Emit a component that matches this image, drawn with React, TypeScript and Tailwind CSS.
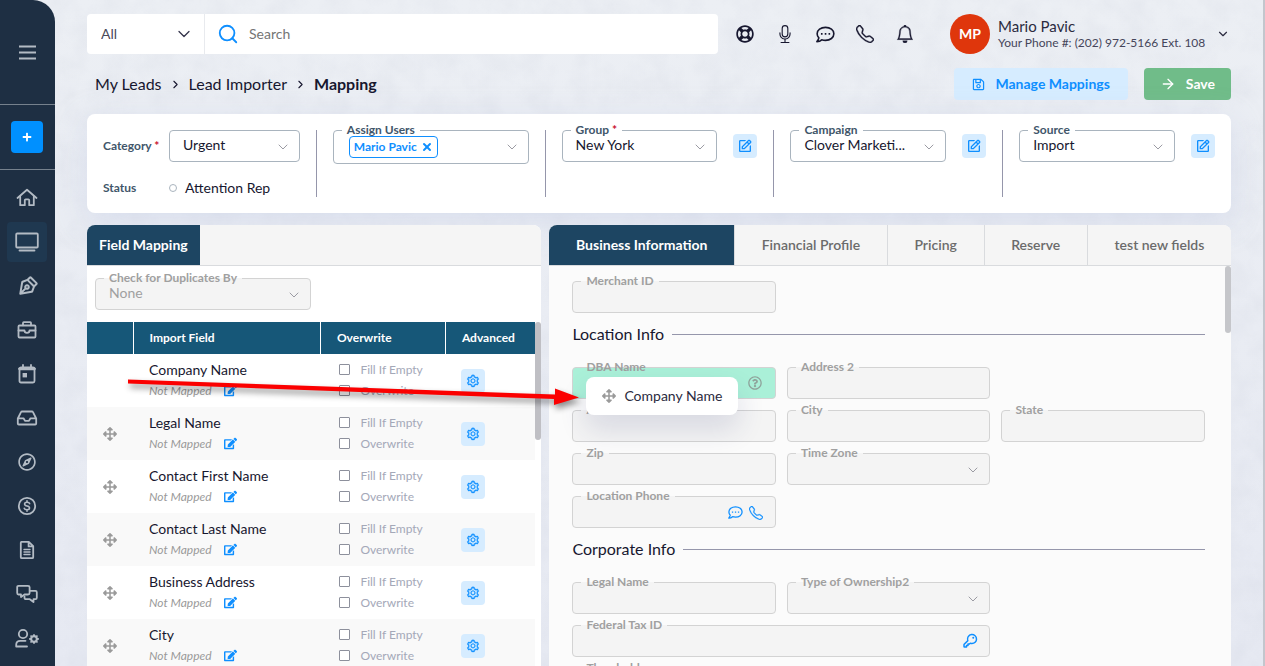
import React, { useState } from 'react';
import { FaArrowsAlt, FaEdit, FaRegLifeRing, FaRegCompass, FaRegQuestionCircle, FaRegSave, FaPlus } from 'react-icons/fa';
import { BsBell, BsMic, BsTelephone, BsGearFill } from 'react-icons/bs';
import { PiKeyBold, PiPenNibBold } from 'react-icons/pi';
import { AiOutlineSetting } from 'react-icons/ai';
import { BiEdit } from 'react-icons/bi';
import { ArrowRight, ChevronDown, ChevronRight, Search, X } from 'lucide-react';

interface ImportField {
  id: string;
  name: string;
  dragging?: boolean;
}

const importFields: ImportField[] = [
  { id: 'company', name: 'Company Name', dragging: true },
  { id: 'legal', name: 'Legal Name' },
  { id: 'first', name: 'Contact First Name' },
  { id: 'last', name: 'Contact Last Name' },
  { id: 'address', name: 'Business Address' },
  { id: 'city', name: 'City' },
];

const tabs = ['Business Information', 'Financial Profile', 'Pricing', 'Reserve', 'test new fields'];

const lineIcon = {
  width: 22,
  height: 22,
  viewBox: '0 0 22 22',
  fill: 'none',
  stroke: 'currentColor',
  strokeWidth: 1.8,
  strokeLinejoin: 'round' as const,
  strokeLinecap: 'round' as const,
};

const HomeIcon = () => (
  <svg {...lineIcon}>
    <path d="M1.5 11 11 2.8 20.500 11" />
    <path d="M4.200 9.500V18.200H8.800V13.200Q8.800 12.300 9.700 12.300H12.300Q13.200 12.300 13.200 13.200V18.200H17.800V9.500" />
  </svg>
);

const MonitorIcon = () => (
  <svg {...lineIcon} width={24} height={22} viewBox="0 0 24 22">
    <rect x="1.200" y="2.500" width="21.600" height="14" rx="1" />
    <path d="M4.500 19.500H19.500" />
  </svg>
);

const BriefcaseIcon = () => (
  <svg {...lineIcon}>
    <rect x="2.500" y="6.500" width="17" height="12" rx="1" />
    <path d="M7 6.300V4Q7 3.200 7.800 3.200H14.200Q15 3.200 15 4V6.300M2.500 11.500H8.500Q8.500 13.800 11 13.800T13.500 11.500H19.500" />
  </svg>
);

const CalendarIcon = () => (
  <svg {...lineIcon}>
    <rect x="3.500" y="4.500" width="15" height="15" rx="1.500" />
    <path d="M3.500 5.800H18.500" strokeWidth="2.800" />
    <path d="M7 2V5M15 2V5" />
    <rect x="6.600" y="10" width="4.400" height="4.400" fill="currentColor" stroke="none" />
  </svg>
);

const InboxIcon = () => (
  <svg {...lineIcon}>
    <path d="M1.800 11.500 5 5.200Q5.300 4.500 6.200 4.500H15.800Q16.700 4.500 17 5.200L20.200 11.500V16.500Q20.200 17.500 19.200 17.500H2.800Q1.800 17.500 1.800 16.500ZM2 11.300H7.500L9 13.800H13L14.500 11.300H20" />
  </svg>
);

const DollarIcon = () => (
  <svg {...lineIcon}>
    <circle cx="11" cy="11" r="8.200" />
    <path strokeWidth="1.600" d="M13.600 8.600Q13.200 7.300 11 7.300Q8.600 7.300 8.600 9Q8.600 10.600 11 11Q13.500 11.400 13.500 13Q13.500 14.700 11 14.700Q8.600 14.700 8.300 13.300M11 5.700V7.300M11 14.700V16.300" />
  </svg>
);

const FileIcon = () => (
  <svg {...lineIcon}>
    <path d="M5.300 2.800H12.800L17.200 7.200V18.200Q17.200 19.200 16.200 19.200H5.800Q4.800 19.200 4.800 18.200V3.800Q4.800 2.800 5.800 2.800M12.600 3V7.400H17" />
    <path strokeWidth="1.400" d="M8 10.500H14M8 13H14M8 15.500H14" />
  </svg>
);

const ChatsIcon = () => (
  <svg {...lineIcon}>
    <path d="M2.500 2.800H12Q13.600 2.800 13.600 4.300V10Q13.600 11.500 12 11.500H8.500L5 14V11.500H2.500Q1.200 11.500 1.200 10V4.300Q1.200 2.800 2.500 2.800Z" />
    <path d="M13.800 7.800H19.500Q20.800 7.800 20.800 9.200V14.700Q20.800 16.200 19.500 16.200H17.500V19L13.800 16.200H10Q8.500 16.200 8.500 14.700V13.500" />
  </svg>
);

const UserGearIcon = () => (
  <span className="flex items-end">
    <svg {...lineIcon} width={14} height={20} viewBox="0 0 14 20">
      <circle cx="8" cy="6" r="4.200" />
      <path d="M12 18.500H1.200V16.800Q1.200 12.800 5.200 12.800H10.500" />
    </svg>
    <BsGearFill size={10} className="mb-1" />
  </span>
);

// speech bubble with three dots and a tail at the lower left
const ChatBubble = ({ size }: { size: number }) => (
  <svg width={size} height={size} viewBox="0 0 20 20" fill="none" stroke="currentColor" strokeWidth="1.700" strokeLinejoin="round">
    <path d="M10 2.500C5 2.500 1.200 5.400 1.200 9.300C1.200 11 1.900 12.500 3 13.600C2.800 15 2 16.300 1 17.500C3 17.500 4.800 16.800 6 15.600C7.200 16 8.600 16.200 10 16.200C15 16.200 18.800 13.200 18.800 9.300C18.800 5.400 15 2.500 10 2.500Z" />
    <path d="M5.200 9.400H6.900M9.200 9.400H10.900M13.200 9.400H14.900" strokeWidth="1.800" />
  </svg>
);

const sidebarItems = [
  { label: 'Home', icon: <HomeIcon /> },
  { label: 'Leads', icon: <MonitorIcon />, active: true },
  { label: 'Signatures', icon: <PiPenNibBold size={21} /> },
  { label: 'Portfolio', icon: <BriefcaseIcon /> },
  { label: 'Calendar', icon: <CalendarIcon /> },
  { label: 'Inbox', icon: <InboxIcon /> },
  { label: 'Explore', icon: <FaRegCompass size={18} /> },
  { label: 'Residuals', icon: <DollarIcon /> },
  { label: 'Documents', icon: <FileIcon /> },
  { label: 'Messages', icon: <ChatsIcon /> },
  { label: 'User settings', icon: <UserGearIcon /> },
];

const Sidebar = () => (
  <aside className="relative w-[55px] shrink-0 bg-[#1e2f43] text-[#b3bbc4] rounded-tr-[22px]">
    <div className="h-[104px] pr-px flex items-center justify-center">
      <button aria-label="Menu">
        <svg width="17" height="15" viewBox="0 0 17 15" stroke="currentColor" strokeWidth="2">
          <path d="M0 1.500H17M0 7.500H17M0 13.500H17" />
        </svg>
      </button>
    </div>
    <div className="h-[66px] pr-px border-y border-[#76818d] flex items-center justify-center">
      <button aria-label="Add" className="w-8 h-8 rounded bg-[#0090ff] text-white flex items-center justify-center">
        <FaPlus size={10} />
      </button>
    </div>
    <nav className="flex flex-col items-center gap-1 pt-2 pr-px">
      {sidebarItems.map(item => (
        <a
          key={item.label}
          href="#"
          aria-label={item.label}
          className={`w-10 h-10 shrink-0 rounded flex items-center justify-center ${item.active ? 'bg-[#1f3850]' : ''}`}
        >
          {item.icon}
        </a>
      ))}
    </nav>
  </aside>
);

const TopBar = () => (
  <header className="flex items-center h-10">
    <div className="flex flex-1 h-10 bg-white rounded overflow-hidden">
      <div className="relative w-[118px] border-r border-[#e8eaee]">
        <select aria-label="Search in" className="appearance-none w-full h-full pl-[14px] text-sm text-[#4a4a5a] outline-none">
          <option>All</option>
        </select>
        <ChevronDown size={20} strokeWidth={1.500} className="absolute right-[10px] top-[10px] text-[#33334a] pointer-events-none" />
      </div>
      <Search size={22} strokeWidth={2} className="ml-3 self-center text-[#0f8fff]" />
      <input aria-label="Search" placeholder="Search" className="flex-1 pl-[10px] text-sm outline-none placeholder:text-[#757575]" />
    </div>
    <div className="flex ml-[7px] text-[#17172f]">
      <button aria-label="Help" className="w-10 h-10 flex items-center justify-center"><FaRegLifeRing size={18} /></button>
      <button aria-label="Voice" className="w-10 h-10 flex items-center justify-center"><BsMic size={18} /></button>
      <button aria-label="Messages" className="w-10 h-10 flex items-center justify-center"><ChatBubble size={19} /></button>
      <button aria-label="Calls" className="w-10 h-10 flex items-center justify-center"><BsTelephone size={18} className="stroke-[0.3]" /></button>
      <button aria-label="Notifications" className="w-10 h-10 flex items-center justify-center"><BsBell size={18} className="stroke-[0.3]" /></button>
    </div>
    <button className="ml-[25px] w-[281px] shrink-0 flex items-center text-left text-[#2b2b40]">
      <span className="w-10 h-10 shrink-0 rounded-full bg-[#df360c] text-white text-sm font-bold flex items-center justify-center">MP</span>
      <span className="flex-1 pl-2 pb-px whitespace-nowrap">
        <span className="block text-[15px] leading-[18px]">Mario Pavic</span>
        <span className="block text-xs leading-4 text-[#45455a]">Your Phone #: (202) 972-5166 Ext. 108</span>
      </span>
      <ChevronDown size={14} strokeWidth={2} className="mr-px shrink-0" />
    </button>
  </header>
);

const Caret = () => (
  <ChevronDown size={16} strokeWidth={1.500} className="absolute right-2 top-2 text-[#9b9ba3] pointer-events-none" />
);

interface FilterSelectProps {
  id: string;
  label?: string;
  value: string;
  required?: boolean;
}

const FilterSelect: React.FC<FilterSelectProps> = ({ id, label, value, required }) => (
  <div className="relative flex-1 h-8 border border-[#a9b4be] rounded">
    {label && (
      <label htmlFor={id} className="absolute z-10 left-2 -top-[7px] px-[5px] bg-white text-xs leading-3 font-bold text-[#41566a]">
        {label} {required && <span className="text-[#c8102e]">*</span>}
      </label>
    )}
    <select id={id} className="appearance-none block w-full h-7 pl-[13px] text-sm text-[#17172f] outline-none">
      <option>{value}</option>
    </select>
    <Caret />
  </div>
);

const EditButton = ({ label }: { label: string }) => (
  <button aria-label={label} className="w-6 h-6 shrink-0 mt-1 rounded bg-[#d6ecff] text-[#0f8fff] flex items-center justify-center">
    <BiEdit size={16} />
  </button>
);

const Filters = () => (
  <section className="grid grid-cols-5 mt-[14px] py-4 bg-white rounded-lg shadow-[0_8px_30px_rgba(200,208,232,0.5)]">
    <div className="px-4 h-[67px]">
      <div className="flex items-center">
        <label htmlFor="category" className="w-[66px] text-xs font-bold text-[#41566a]">Category <span className="text-[#c8102e]">*</span></label>
        <FilterSelect id="category" value="Urgent" />
      </div>
      <div className="flex items-center mt-4 h-5">
        <span className="w-[66px] text-xs font-bold text-[#41566a]">Status</span>
        <input id="attention" type="radio" name="status" className="appearance-none w-2 h-2 border border-[#a9b4be] rounded-full" />
        <label htmlFor="attention" className="pl-2 text-sm text-[#17172f]">Attention Rep</label>
      </div>
    </div>
    <div className="px-4 border-l border-[#9596ab]">
      <div className="relative h-[34px] border border-[#a9b4be] rounded">
        <span className="absolute z-10 left-2 -top-[7px] px-[5px] bg-white text-xs leading-3 font-bold text-[#41566a]">Assign Users</span>
        <div className="inline-flex items-center h-[22px] mt-[5px] ml-[15px] px-1 gap-1 border border-[#0f8fff] rounded text-xs font-bold text-[#0f8fff]">
          Mario Pavic
          <button aria-label="Remove Mario Pavic"><X size={12} strokeWidth={4} /></button>
        </div>
        <Caret />
      </div>
    </div>
    <div className="flex gap-4 px-4 border-l border-[#9596ab]">
      <FilterSelect id="group" label="Group" value="New York" required />
      <EditButton label="Edit group" />
    </div>
    <div className="flex gap-4 px-4 border-l border-[#9596ab]">
      <FilterSelect id="campaign" label="Campaign" value="Clover Marketi..." />
      <EditButton label="Edit campaign" />
    </div>
    <div className="flex gap-4 px-4 border-l border-[#9596ab]">
      <FilterSelect id="source" label="Source" value="Import" />
      <EditButton label="Edit source" />
    </div>
  </section>
);

const FieldMapping = () => (
  <section className="flex flex-col min-w-0 bg-white rounded-t-lg overflow-hidden">
    <div className="h-[41px] bg-[#f5f5f5] border-b border-[#d9dbde]">
      <h2 className="inline-flex items-center h-10 px-3 bg-[#1d4562] text-white text-sm font-bold">Field Mapping</h2>
    </div>
    <div className="relative w-[216px] h-8 shrink-0 mt-3 ml-2 border border-[#d3d3d3] rounded bg-[#f4f4f4] text-[#a0a0a0]">
      <label htmlFor="duplicates" className="absolute z-10 left-2 -top-2 px-[5px] bg-linear-to-b from-white from-50% to-[#f4f4f4] to-50% text-xs leading-[14px] font-bold whitespace-nowrap">
        Check for Duplicates By
      </label>
      <select id="duplicates" className="appearance-none block w-full h-7 pl-[13px] text-sm outline-none">
        <option>None</option>
      </select>
      <Caret />
    </div>
    <div className="relative mt-3 pr-[6px]">
      <table className="w-full table-fixed border-collapse">
        <thead>
          <tr className="h-8 bg-[#165778] text-white text-xs text-left">
            <th className="w-[46px] border-r border-white" aria-label="Drag"></th>
            <th className="px-4 font-bold border-r border-white">Import Field</th>
            <th className="w-[125px] px-4 font-bold border-r border-white">Overwrite</th>
            <th className="w-[90px] px-4 font-bold">Advanced</th>
          </tr>
        </thead>
        <tbody>
          {importFields.map(field => (
            <tr key={field.id} className="h-[53px] even:bg-[#f9f9f9]">
              <td>
                {!field.dragging && <FaArrowsAlt size={14} className="mx-auto text-[#9a9a9a]" />}
              </td>
              <td className="px-4 pb-0.5">
                <p className="text-sm leading-[21px] text-[#17172f]">{field.name}</p>
                <p className="flex items-center gap-3 text-xs leading-[21px] italic text-[#9a9a9a]">
                  Not Mapped
                  <button aria-label={`Edit ${field.name}`} className="text-[#0f8fff]"><FaEdit size={13} /></button>
                </p>
              </td>
              <td className="px-4 pb-0.5 text-xs leading-[21px] text-[#a4a8b8]">
                <label className="flex items-center gap-[10px] pl-[3px]">
                  <input type="checkbox" className="appearance-none w-[11px] h-[11px] border border-[#8d909c] rounded-[1px] bg-white" />
                  Fill If Empty
                </label>
                <label className="flex items-center gap-[10px] pl-[3px]">
                  <input type="checkbox" className="appearance-none w-[11px] h-[11px] border border-[#8d909c] rounded-[1px] bg-white" />
                  Overwrite
                </label>
              </td>
              <td className="px-4">
                <button aria-label={`Advanced settings for ${field.name}`} className="w-6 h-6 rounded bg-[#d6ecff] text-[#0f8fff] flex items-center justify-center">
                  <AiOutlineSetting size={14} className="stroke-[20]" />
                </button>
              </td>
            </tr>
          ))}
        </tbody>
      </table>
      <div className="absolute right-0 top-0 w-[6px] h-[118px] rounded-full bg-[#bfbfc4]"></div>
    </div>
  </section>
);

interface FormFieldProps {
  id: string;
  label: string;
  select?: boolean;
  highlighted?: boolean;
  className?: string;
  children?: React.ReactNode;
}

const FormField: React.FC<FormFieldProps> = ({ id, label, select, highlighted, className = '', children }) => (
  <div className={`relative h-8 border border-[#d3d3d3] rounded ${highlighted ? 'bg-[#aaf0d8]' : 'bg-[#f4f4f4]'} ${className}`}>
    <label
      htmlFor={id}
      className={`absolute left-2 -top-2 px-[5px] text-xs leading-[14px] font-bold text-[#a0a0a0] whitespace-nowrap ${highlighted ? '' : 'bg-linear-to-b from-[#fbfbfb] from-50% to-[#f4f4f4] to-50%'}`}
    >
      {label}
    </label>
    {select ? (
      <select id={id} className="appearance-none block w-full h-full pl-[13px] text-sm outline-none" />
    ) : (
      <input id={id} type="text" className="block w-full h-full px-[13px] text-sm outline-none" />
    )}
    {select && <Caret />}
    {children}
  </div>
);

const SectionTitle = ({ children }: { children: React.ReactNode }) => (
  <h3 className="flex items-center gap-2 h-[42px] mb-3 text-base text-[#17172f]">
    {children}
    <span className="flex-1 h-px bg-[#9596ab]"></span>
  </h3>
);

const DragGhost = () => (
  <div className="absolute z-20 left-[13px] top-[9px] flex items-center gap-2 h-[38px] px-4 bg-white rounded-lg shadow-[0_14px_28px_rgba(40,50,110,0.14)] text-sm text-[#2b2b40] whitespace-nowrap">
    <FaArrowsAlt size={14} className="text-[#9a9a9a]" />
    Company Name
  </div>
);

const BusinessForm = () => {
  const [activeTab, setActiveTab] = useState(tabs[0]);

  return (
    <section className="flex flex-col min-w-0 bg-[#fbfbfb] rounded-t-lg">
      <div className="flex h-[41px] shrink-0 bg-[#f5f5f5] border-b border-[#d9dbde] rounded-t-lg overflow-hidden">
        {tabs.map(tab => (
          <button
            key={tab}
            onClick={() => setActiveTab(tab)}
            className={`grow h-10 px-6 text-sm whitespace-nowrap border-r border-[#d9dbde] last:border-r-0 ${activeTab === tab ? 'bg-[#1d4562] text-white font-bold' : 'text-[#6b6b6b] font-semibold'}`}
          >
            {tab}
          </button>
        ))}
      </div>
      <div className="relative pt-[15px] pl-[23px] pr-[26px]">
        <div className="grid grid-cols-3 gap-[11px]">
          <FormField id="merchant" label="Merchant ID" />
        </div>
        <SectionTitle>Location Info</SectionTitle>
        <div className="grid grid-cols-3 gap-[11px]">
          <FormField id="dba" label="DBA Name" highlighted>
            <FaRegQuestionCircle size={14} className="absolute right-[13px] top-2 text-[#8fa39b]" />
            <DragGhost />
          </FormField>
          <FormField id="address2" label="Address 2" />
          <FormField id="address" label="Address" className="col-start-1" />
          <FormField id="city" label="City" />
          <FormField id="state" label="State" />
          <FormField id="zip" label="Zip" />
          <FormField id="timezone" label="Time Zone" select />
          <FormField id="phone" label="Location Phone" className="col-start-1">
            <span className="absolute right-3 top-2 flex gap-[6px] text-[#0f8fff]">
              <button aria-label="Send text"><ChatBubble size={15} /></button>
              <button aria-label="Call"><BsTelephone size={14} className="stroke-[0.3]" /></button>
            </span>
          </FormField>
        </div>
        <SectionTitle>Corporate Info</SectionTitle>
        <div className="grid grid-cols-3 gap-[11px]">
          <FormField id="legalname" label="Legal Name" />
          <FormField id="ownership" label="Type of Ownership2" select />
          <FormField id="taxid" label="Federal Tax ID" className="col-start-1 col-span-2">
            <button aria-label="Reveal tax ID" className="absolute right-[11px] top-[7px] text-[#0f8fff]"><PiKeyBold size={16} /></button>
          </FormField>
          <FormField id="threshold" label="Threshold" className="col-start-1" />
        </div>
        <div className="absolute right-0 top-0 w-[6px] h-[67px] rounded-full bg-[#c5c6ca]"></div>
      </div>
    </section>
  );
};

// red pointer from the dragged row to its drop target
const DragArrow = () => (
  <svg className="absolute z-30 left-[124px] top-[374px] pointer-events-none drop-shadow-[2px_4px_3px_rgba(0,0,0,0.45)]" width="460" height="36" viewBox="0 0 460 36">
    <path d="M4 5.500L431 20.500V14.500L455 23.500L430 31V25L4 9.500Z" fill="#fb0000" />
  </svg>
);

// faint plaster grain behind the whole page
const PlasterTexture = () => (
  <svg className="absolute inset-0 w-full h-full opacity-10" aria-hidden="true">
    <filter id="plaster">
      <feTurbulence type="fractalNoise" baseFrequency="0.04" numOctaves="4" seed="3" />
      <feColorMatrix type="matrix" values="0 0 0 0 0.45  0 0 0 0 0.48  0 0 0 0 0.58  1.8 0 0 0 -0.6" />
    </filter>
    <rect width="100%" height="100%" filter="url(#plaster)" />
  </svg>
);

const App: React.FC = () => (
  <div className="relative flex h-screen overflow-hidden bg-linear-to-b from-[#eceff4] to-[#e6e9f2] border-r-2 border-[#c3c6cd] font-['Lato',sans-serif]">
    <PlasterTexture />
    <Sidebar />
    <main className="relative flex flex-col flex-1 min-w-0 px-8 pt-[14px]">
      <TopBar />
      <div className="flex items-center mt-[14px] h-8">
        <nav aria-label="Breadcrumb" className="flex items-center gap-[7px] flex-1 pl-2 text-base text-[#17172f]">
          <a href="#">My Leads</a>
          <ChevronRight size={13} strokeWidth={2} />
          <a href="#">Lead Importer</a>
          <ChevronRight size={13} strokeWidth={2} />
          <span className="font-bold">Mapping</span>
        </nav>
        <button className="flex items-center gap-[10px] h-8 px-[18px] rounded bg-[#d6ecff] text-[#0f8fff] text-sm font-bold">
          <FaRegSave size={13} />
          Manage Mappings
        </button>
        <button className="flex items-center gap-[10px] h-8 ml-4 px-4 rounded bg-[#70bc89] text-white text-sm font-bold">
          <ArrowRight size={16} />
          Save
        </button>
      </div>
      <Filters />
      <div className="grid grid-cols-[2fr_3fr] gap-2 mt-3 flex-1 min-h-0">
        <FieldMapping />
        <BusinessForm />
      </div>
    </main>
    <DragArrow />
  </div>
);

export default App;
